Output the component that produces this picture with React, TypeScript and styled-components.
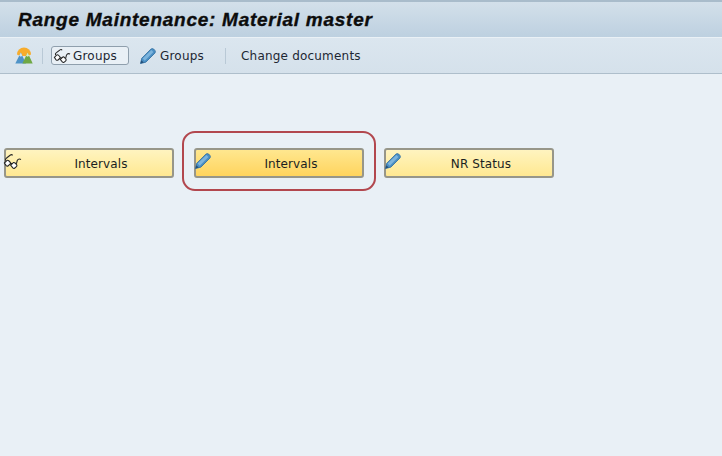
import React from "react";
import styled, { createGlobalStyle } from "styled-components";

const GlobalStyle = createGlobalStyle`
  html, body {
    margin: 0;
    padding: 0;
    background: #e9f0f6;
  }
`;

const Page = styled.div`
  width: 722px;
  height: 456px;
  overflow: hidden;
  display: flex;
  flex-direction: column;
  background: #e9f0f6;
  font-family: "DejaVu Sans", sans-serif;
  color: #1d2733;
`;

const TitleBar = styled.div`
  height: 35px;
  flex: none;
  display: flex;
  align-items: center;
  padding-left: 18px;
  border-top: 2px solid #a9bccb;
  background: linear-gradient(#d3e0ea, #bdd0e0);
`;

const Title = styled.h1`
  margin: 0;
  font-family: "Liberation Sans", Arial, sans-serif;
  font-size: 19px;
  font-weight: 700;
  font-style: italic;
  letter-spacing: 0.74px;
  color: #0c0c0c;
  -webkit-text-stroke: 0.35px #0c0c0c;
`;

const Toolbar = styled.div`
  height: 37px;
  flex: none;
  display: flex;
  align-items: center;
  padding-left: 15px;
  background: linear-gradient(#dbe6ef, #d5e1eb);
  border-top: 1px solid #eaf1f6;
  border-bottom: 1px solid #aebecb;
  box-sizing: border-box;
`;

const Separator = styled.span<{ $left: number; $right: number }>`
  width: 1px;
  height: 16px;
  background: #b9c9d6;
  margin: ${(p) => `0 ${p.$right}px 0 ${p.$left}px`};
`;

const ToolButton = styled.div<{ $pressed?: boolean }>`
  display: flex;
  align-items: center;
  box-sizing: border-box;
  height: 19px;
  font-size: 12px;
  letter-spacing: 0.2px;
  ${(p) =>
    p.$pressed
      ? `
    width: 78px;
    padding-left: 2px;
    margin-right: 10px;
    border: 1px solid #8f9fad;
    border-radius: 3px;
    background: #e9f0f6;
  `
      : ""}
`;

const Label = styled.span<{ $gap?: number }>`
  margin-left: ${(p) => p.$gap ?? 0}px;
`;

const Content = styled.main`
  flex: 1;
  display: flex;
  gap: 20px;
  align-items: flex-start;
  padding: 74px 0 0 4px;
`;

const Highlight = styled.div`
  position: relative;
`;

const Ring = styled.span`
  position: absolute;
  left: -12px;
  top: -17px;
  width: 194px;
  height: 60px;
  box-sizing: border-box;
  border: 2px solid #b2474e;
  border-radius: 13px;
`;

const BigButton = styled.div<{ $active?: boolean }>`
  position: relative;
  width: 170px;
  height: 30px;
  box-sizing: border-box;
  display: flex;
  align-items: center;
  justify-content: center;
  padding: 1px 0 0 24px;
  border: 2px solid #979689;
  border-radius: 3px;
  font-size: 12px;
  letter-spacing: 0.1px;
  color: #1b1f22;
  background: ${(p) =>
    p.$active
      ? "linear-gradient(#ffe78f, #ffd45e)"
      : "linear-gradient(#fff4c0, #ffe891)"};
`;

const IconSlot = styled.span`
  position: absolute;
  left: -2px;
  top: 2px;
  display: flex;
`;

const Pencil = ({ size = 18 }: { size?: number }) => (
  <svg width={size} height={size} viewBox="0 0 18 18">
    <path d="M1.5 16.5 L2.8 11.2 L11.8 2.2 Q13.2 1 14.8 2.2 L15.9 3.4 Q17 4.9 15.8 6.2 L6.8 15.2 Z" fill="#4a8fc4" stroke="#2f6c9e" strokeWidth="0.8" />
    <path d="M3.6 11.6 L12.4 3 L14.4 5 L5.8 13.8 Z" fill="#7db4dc" />
    <path d="M1.5 16.5 L2.3 13.2 L4.8 15.6 Z" fill="#24507a" />
  </svg>
);

const Glasses = ({ size = 18 }: { size?: number }) => (
  <svg width={size} height={size} viewBox="0 0 18 18" fill="none" stroke="#262626" strokeWidth="1.1" overflow="visible">
    <path d="M1.6 8.6 Q1 7 2.6 6 L6.4 3 Q7.8 2.2 8.6 3.4" />
    <path d="M0.4 11 L3 8.4 Q4 8 5 9 L6.4 10.6 Q6.8 11.6 6 12.2 L4 14 Q3 14.4 2.2 13.6 Z" fill="#fff" />
    <path d="M6.6 13 L9.4 10.6 Q10.2 10.2 11 11 L12.8 13 Q13.2 14 12.4 14.6 L10.6 16.2 Q9.6 16.6 8.8 15.8 Z" fill="#fff" />
    <path d="M6.2 11.4 L8.4 11.6" />
    <path d="M12.4 11.8 L13.2 8.6 Q14.4 6.2 17 7.4" />
  </svg>
);

const MountainsIcon = styled.svg`
  margin-top: -2px;
`;

const Mountains = () => (
  <MountainsIcon width="18" height="18" viewBox="0 0 18 18">
    <path d="M2 8.5 A7 7 0 0 1 16 8.5 L13 10 L5 10 Z" fill="#f7ac2c" />
    <path d="M0.3 17.5 L5.8 6.5 L11 17.5 Z" fill="#4f93c7" />
    <path d="M7.4 17.5 L12.6 6.5 L17.7 17.5 Z" fill="#6fa844" />
    <path d="M5.8 6.5 L7.4 9.8 L5.8 10.8 L4.2 9.8 Z" fill="#cfe3f2" />
    <path d="M12.6 6.5 L14.2 9.8 L12.6 10.8 L11 9.8 Z" fill="#dbeac4" />
  </MountainsIcon>
);

export default function App() {
  return (
    <Page>
      <GlobalStyle />
      <TitleBar>
        <Title>Range Maintenance: Material master</Title>
      </TitleBar>
      <Toolbar>
        <Mountains />
        <Separator $left={9} $right={8} />
        <ToolButton $pressed>
          <Glasses size={17} />
          <Label $gap={2}>Groups</Label>
        </ToolButton>
        <ToolButton>
          <Pencil />
          <Label $gap={3}>Groups</Label>
        </ToolButton>
        <Separator $left={21} $right={15} />
        <ToolButton>
          <Label>Change documents</Label>
        </ToolButton>
      </Toolbar>
      <Content>
        <BigButton>
          <IconSlot>
            <Glasses />
          </IconSlot>
          Intervals
        </BigButton>
        <Highlight>
          <Ring />
          <BigButton $active>
            <IconSlot>
              <Pencil />
            </IconSlot>
            Intervals
          </BigButton>
        </Highlight>
        <BigButton>
          <IconSlot>
            <Pencil />
          </IconSlot>
          NR Status
        </BigButton>
      </Content>
    </Page>
  );
}
